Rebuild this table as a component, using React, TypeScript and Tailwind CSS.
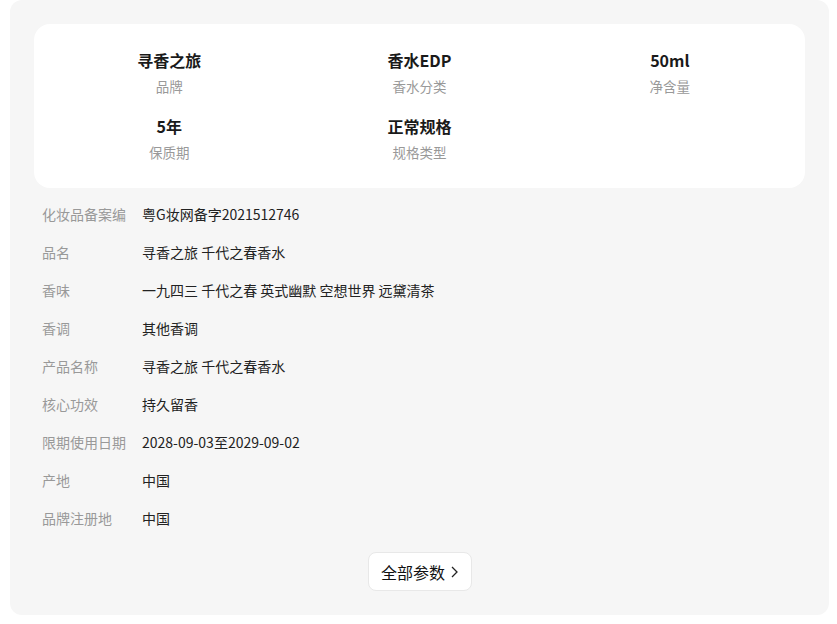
import React from 'react';

const summary = [
    { value: '寻香之旅', label: '品牌' },
    { value: '香水EDP', label: '香水分类' },
    { value: '50ml', label: '净含量' },
    { value: '5年', label: '保质期' },
    { value: '正常规格', label: '规格类型' },
];

const specs = [
    { label: '化妆品备案编号', value: '粤G妆网备字2021512746' },
    { label: '品名', value: '寻香之旅 千代之春香水' },
    { label: '香味', value: '一九四三 千代之春 英式幽默 空想世界 远黛清茶' },
    { label: '香调', value: '其他香调' },
    { label: '产品名称', value: '寻香之旅 千代之春香水' },
    { label: '核心功效', value: '持久留香' },
    { label: '限期使用日期', value: '2028-09-03至2029-09-02' },
    { label: '产地', value: '中国' },
    { label: '品牌注册地', value: '中国' },
];

export default function App() {
    return (
        <div className="min-h-screen bg-white font-['Noto_Sans_CJK_SC','Noto_Sans',sans-serif]">
            <div className="ml-[10px] w-[819px] rounded-xl bg-[#f6f6f6] px-6 pt-6 pb-6">
                <div className="grid grid-cols-3 gap-y-[18px] rounded-2xl bg-white px-[10px] pt-[24px] pb-[26px]">
                    {summary.map((item) => (
                        <div key={item.label} className="flex flex-col items-center">
                            <span className="text-[16px] leading-[24px] font-bold text-[#1a1a1a]">{item.value}</span>
                            <span className="mt-[4px] text-[13.5px] leading-[20px] text-[#999]">{item.label}</span>
                        </div>
                    ))}
                </div>

                <div className="mt-[7px] flex flex-col">
                    {specs.map((row) => (
                        <div key={row.label} className="flex h-[38px] items-center pl-2 text-[14px]">
                            <span className="w-[84px] shrink-0 overflow-hidden whitespace-nowrap text-[#999]">{row.label}</span>
                            <span className="ml-4 text-[#222]">{row.value}</span>
                        </div>
                    ))}
                </div>

                <div className="mt-[15px] flex justify-center">
                    <button className="flex h-[39px] w-[104px] items-center justify-center gap-1.5 rounded-lg border border-[#e8e8e8] bg-white text-[16px] text-[#111]">
                        全部参数
                        <svg width="7" height="12" viewBox="0 0 7 12" fill="none">
                            <path d="M1 1 6 6 1 11" stroke="#222" strokeWidth="1.3" />
                        </svg>
                    </button>
                </div>
            </div>
        </div>
    );
}
